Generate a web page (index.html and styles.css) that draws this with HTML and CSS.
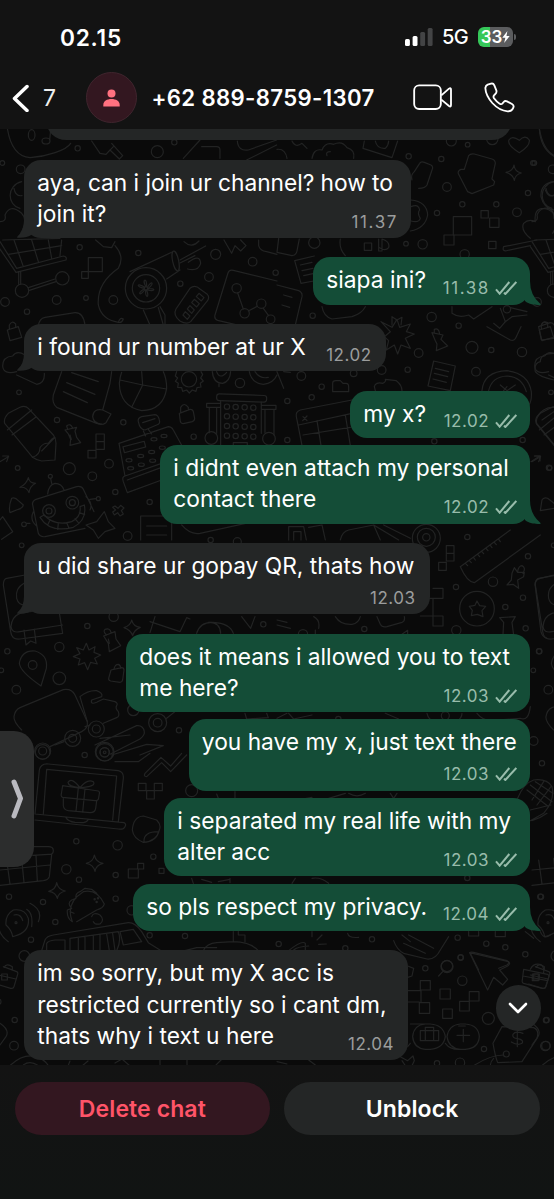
FILE: index.html
```
<!DOCTYPE html>
<html lang="id">
<head>
<meta charset="utf-8">
<title>Chat</title>
<link rel="stylesheet" href="styles.css">
</head>
<body>
<svg class="defs" width="0" height="0">
  <defs>
    <symbol id="ticks" viewBox="0 0 66 42"><path d="M3 25l11 13L43 3M27 35l4 4L64 3"/></symbol>
    <symbol id="tail-out" viewBox="0 0 16 24"><path d="M0 0V20C4 23.500 9 24 15 24Q16.300 23.600 15 22.500Q5 14 5 0Z"/></symbol>
    <symbol id="tail-in" viewBox="0 0 16 24"><path d="M16 0V20.500C12 23.500 7 24 1.500 23.700Q.5 23.300 1.500 22.500Q8 17 8 6V0Z"/></symbol>
  </defs>
</svg>
<div class="phone">
  <header class="top">
    <div class="status">
      <span class="clock">02.15</span>
      <div class="indicators">
        <svg class="signal" viewBox="0 0 28 18"><rect x="0" y="11" width="4.900" height="7" rx="1.500"/><rect x="7.600" y="8" width="4.900" height="10" rx="1.500"/><rect class="off" x="15.200" y="4" width="4.900" height="14" rx="1.500"/><rect class="off" x="22.700" y="0" width="4.900" height="18" rx="1.500"/></svg>
        <span class="net">5G</span>
        <span class="battery"><span class="pct">33</span><svg class="bolt" viewBox="0 0 8 13"><path d="M5.500 0L0 7.300H3.300L2 13 8 5.300H4.500Z"/></svg></span><span class="nub"></span>
      </div>
    </div>
    <div class="bar">
      <svg class="back" viewBox="0 0 18 28"><path d="M15 2.500L2.500 14.500 15 26.500"/></svg>
      <span class="count">7</span>
      <span class="avatar"><svg viewBox="0 0 17 18"><circle cx="8.500" cy="4.500" r="4"/><path d="M.3 17.500V16C.3 12 4 10 8.500 10s8.200 2 8.200 6v1.500Z"/></svg></span>
      <span class="title">+62 889-8759-1307</span>
      <svg class="video" viewBox="408 250 120 80"><rect x="411.500" y="254" width="80" height="71" rx="15"/><path d="M493 284L516 264Q522 260 522 267V313Q522 320 516 316L493 297"/></svg>
      <svg class="call" viewBox="622 244 93 93"><path d="M633 252L643 249Q650 247 653 254L659 269Q661 276 656 280L652 284Q649 288 652 293Q659 303 669 309Q674 312 677 309L681 304Q685 299 691 302L706 310Q713 314 710 321Q706 332 693 332Q668 330 647 307Q627 284 626 262Q627 255 633 252Z"/></svg>
    </div>
  </header>

  <main class="chat">
    <svg class="wallpaper" viewBox="0 0 554 936">
      <defs>
        <g id="strip">
          <!-- shopping cart and cloud -->
          <g transform="translate(0 -4) scale(.3333)">
            <path d="M22 10C30 60 50 95 90 98C140 95 200 75 212 55M65 170C20 180 20 240 60 250M42 190Q46 215 66 212M0 290Q20 290 15 270Q30 235 65 265Q85 285 62 325M0 350L50 430 190 393Q202 395 198 405L48 442-5 365M8 345L180 340M42 345L70 425M95 345L115 410M145 345L155 400M185 345L180 392M25 388L185 362M62 440V478M56 440V478M85 488L165 462M88 496L168 470"/>
            <circle cx="66" cy="497" r="20"/><circle cx="187" cy="460" r="20"/><circle cx="7" cy="114" r="7"/><circle cx="62" cy="133" r="13"/><circle cx="15" cy="531" r="13"/><circle cx="81" cy="560" r="8"/>
          </g>
          <!-- padlock, cloud, pencil, robot -->
          <g transform="translate(0 191) scale(.3333)">
            <path d="M22 30L55 20 65 52 30 62ZM28 26V15Q36 0 47 12V22M50 155Q10 165 8 138Q8 110 38 108Q50 90 75 105M50 165L110 193Q135 190 133 160M14 310Q10 295 25 280L60 262Q75 255 85 265L160 345Q168 355 168 370L165 420 125 423Q108 420 98 412ZM22 330L95 270M36 345L107 292M125 393L165 352M97 412Q120 405 120 383Q130 368 145 370Q155 355 165 352M0 425L25 410M8 408L26 408 20 425"/>
            <circle cx="57" cy="217" r="7"/><circle cx="53" cy="444" r="7"/>
          </g>
          <!-- book, map pin -->
          <g transform="translate(0 406) scale(.3333)">
            <path d="M75 120L20 130Q10 132 10 150L32 290Q35 315 60 312L188 295 175 215 60 235Q35 245 33 275Q35 295 60 290L188 270M72 285L78 330 92 318 108 325 103 282M123 453Q60 410 58 385Q65 345 105 348Q145 360 139 400ZM72 145Q45 160 50 190Q55 210 75 210"/>
            <circle cx="98" cy="390" r="13"/><circle cx="22" cy="349" r="8"/><circle cx="4" cy="406" r="7"/><circle cx="49" cy="464" r="13"/><circle cx="65" cy="31" r="7"/>
            <path d="M65 585Q40 560 42 545Q45 525 60 518L190 464Q215 460 225 480L262 560Q265 580 245 590L150 635"/>
          </g>
          <!-- basket, chat bubble, briefcase -->
          <g transform="translate(0 621) scale(.3333)">
            <path d="M100 290H145Q160 290 160 302Q160 315 145 313L98 316M155 314L148 380Q145 390 130 392L0 406M0 360L150 345M20 330L30 402M65 325L72 398M108 316L112 393M38 560Q35 540 18 525Q15 495 40 480Q75 475 85 505Q90 545 45 558ZM80 478Q100 490 95 530M90 460Q130 480 115 515M25 575Q-5 555 -5 520M42 495Q62 490 68 512"/>
            <circle cx="48" cy="518" r="3"/><circle cx="27" cy="440" r="8"/><circle cx="93" cy="569" r="8"/><circle cx="73" cy="618" r="16"/>
          </g>
          <g transform="translate(0 811) scale(.3333)">
            <path d="M10 80L50 95Q55 97 53 103L42 140Q40 147 32 145L-10 132M12 82Q20 68 37 80V90M-5 105L48 117M0 250Q30 270 18 290L0 315"/><rect x="5" y="102" width="17" height="18"/>
            <circle cx="44" cy="240" r="8"/><circle cx="42" cy="317" r="13"/><circle cx="-5" cy="185" r="8"/><path d="M32 375Q70 340 110 350Q135 360 145 377M70 375Q90 360 115 377"/>
          </g>
        </g>
      </defs>
      <use href="#strip"/><use href="#strip" x="532"/>
      <!-- hair dryer, comb, graph -->
      <g transform="translate(0 -4) scale(.3333)">
        <ellipse cx="95" cy="30" rx="10" ry="16"/><ellipse cx="138" cy="48" rx="12" ry="9"/><path d="M149 44L152 15 165 25"/>
        <circle cx="233" cy="70" r="8"/><circle cx="239" cy="367" r="8"/><circle cx="415" cy="384" r="8"/><circle cx="472" cy="80" r="18"/><circle cx="523" cy="52" r="8"/><circle cx="647" cy="388" r="15"/><circle cx="758" cy="410" r="13"/><circle cx="627" cy="456" r="13"/><circle cx="541" cy="476" r="8"/><circle cx="340" cy="525" r="13"/><circle cx="258" cy="519" r="7"/><circle cx="170" cy="525" r="13"/><circle cx="827" cy="443" r="8"/>
        <path d="M275 48L300 85 318 88 330 75 358 102 368 92 335 55M318 88L340 65M550 100L600 45M605 65H650Q660 65 660 75V100M712 48Q715 80 745 75L830 45M740 105L830 60"/>
        <rect x="265" y="398" width="42" height="42"/><rect x="245" y="440" width="20" height="20"/>
        <path d="M287 345L310 365 335 368 345 350M345 362Q375 395 355 430Q290 475 295 540Q305 585 355 592Q360 575 370 582Q365 595 355 592"/>
        <circle cx="438" cy="490" r="62"/><circle cx="438" cy="490" r="41"/><circle cx="438" cy="490" r="5"/>
        <path d="M438 485C425 465 440 455 440 482M443 486C455 465 465 475 445 490M443 492C470 488 465 502 443 495M440 496C450 520 435 520 437 496M434 495C420 515 410 505 432 492M433 490C405 485 412 472 434 487"/>
        <path d="M390 440L515 382M500 462L540 435M540 405L617 363M540 414L585 392M565 412Q600 385 602 415Q595 440 563 432M552 350Q575 372 597 348M430 555L450 600M475 548L490 600M480 545L495 570V600"/><ellipse cx="527" cy="408" rx="9" ry="30" transform="rotate(-12 527 408)"/>
        <path d="M570 490Q585 478 600 492L622 508Q630 517 622 528L572 590Q560 600 540 588Q518 570 528 552ZM597 505L612 518 604 528 589 515ZM583 523L598 536 590 546 575 533ZM570 542L583 555 575 565 562 552ZM556 560L570 573 562 583 549 570Z"/>
        <path d="M831 468L700 436Q688 433 684 444L645 570Q642 582 653 586L720 602M713 504L730 552M745 558L772 544M790 550L806 572"/><circle cx="710" cy="490" r="14"/><circle cx="734" cy="565" r="14"/><circle cx="784" cy="536" r="14"/><circle cx="812" cy="583" r="13"/>
        <path d="M672 345L695 385 705 362 722 378 738 362 722 345M776 345V362Q780 378 800 380L831 388M115 602Q118 580 135 577L225 563Q250 562 255 600"/>
      </g>
      <!-- gift glove, heart, squares -->
      <g transform="translate(277 -4) scale(.3333)">
        <path d="M727 83Q690 60 696 45Q705 30 727 46Q745 27 757 45Q760 62 727 83ZM787 10Q790 70 831 94M575 92Q580 85 592 87L645 102Q655 105 655 115L645 162 653 170 650 180 585 206 572 200 545 148Q540 138 552 133H562ZM711 120Q713 140 733 144Q715 148 712 166Q708 148 687 142Q708 138 711 120ZM831 170Q790 175 792 215Q800 250 831 255M805 195Q815 220 831 210M760 340Q730 315 740 295Q755 280 775 290Q770 250 800 250Q831 245 831 280M680 365L780 345M685 378L760 362M680 365Q675 378 687 378"/>
        <path d="M405 165Q400 150 412 140L428 115Q432 108 442 112L462 120Q470 125 465 135L450 180Q445 190 425 190M402 225Q450 230 452 270Q445 310 400 318M402 245Q425 235 428 255Q420 265 430 280Q425 295 402 288M105 100Q110 70 135 75Q145 50 170 58Q195 45 210 68Q235 75 230 100M150 92Q145 80 160 80M262 48L258 70 345 98 362 48M295 48Q300 72 325 70Q335 60 335 48M0 73Q25 70 30 100M45 48Q55 70 75 55L90 70"/>
        <circle cx="395" cy="94" r="8"/><circle cx="493" cy="102" r="8"/><circle cx="572" cy="59" r="7"/><circle cx="523" cy="48" r="15"/><circle cx="646" cy="42" r="17"/><circle cx="768" cy="114" r="7"/><circle cx="510" cy="186" r="13"/><circle cx="556" cy="238" r="8"/><circle cx="480" cy="264" r="8"/><circle cx="658" cy="238" r="8"/><circle cx="753" cy="204" r="8"/><circle cx="720" cy="262" r="13"/><circle cx="437" cy="358" r="14"/><circle cx="387" cy="356" r="7"/><circle cx="563" cy="388" r="14"/><circle cx="112" cy="353" r="17"/><circle cx="107" cy="572" r="8"/><circle cx="464" cy="576" r="14"/><circle cx="690" cy="553" r="11"/>
        <rect x="529" y="275" width="55" height="55"/><rect x="501" y="330" width="30" height="30"/><rect x="612" y="257" width="22" height="22"/><rect x="638" y="279" width="28" height="28"/><rect x="635" y="349" width="22" height="22"/><rect x="262" y="354" width="22" height="22"/>
        <path d="M53 407L112 393M53 407L72 475 110 468M70 420L105 412M75 437L108 430M80 452L108 446M5 340L0 382 45 392Q58 390 60 378L67 342M190 342Q185 370 205 392M305 342V378H315V342Q340 350 335 368Q325 380 308 368M0 480L65 497Q77 502 75 515L55 600M20 510L45 517M15 540L38 547M135 545Q140 575 165 582L225 575Q255 565 265 545M345 600V575L360 585 375 577 372 600M525 545V565Q545 580 575 570L590 582 645 545M670 550L685 590 705 575 750 570M700 548L750 560"/>
      </g>
      <!-- scroll, pie chart, gear, building, register, robot -->
      <g transform="translate(0 191) scale(.3333)">
        <path d="M185 155L160 225Q155 250 170 262L290 310Q305 318 318 308L333 282 308 270 330 190 335 155M308 270Q280 265 278 290Q280 310 305 312M215 158L295 185M200 188L285 223M190 215L262 248M358 190Q360 260 425 272Q490 270 500 205Q500 175 490 155M358 190Q360 170 365 157M425 155L428 195 500 207M360 180L428 195 395 262"/>
        <circle cx="567" cy="178" r="23"/><path d="M530 155L526 168 533 174 526 184 535 190 533 202 545 203 548 214 560 210 568 219 577 210 588 214 591 203 603 201 601 190 610 183 602 174 608 164 603 155"/><path d="M637 155Q640 190 668 190Q690 185 692 155M650 155Q660 180 680 157M657 192V200M748 155Q755 190 790 193Q820 190 831 165M765 155Q780 178 805 172"/>
        <circle cx="720" cy="189" r="14"/><circle cx="171" cy="300" r="8"/><circle cx="370" cy="307" r="8"/><circle cx="581" cy="350" r="8"/><circle cx="208" cy="446" r="18"/><circle cx="327" cy="431" r="13"/><circle cx="277" cy="469" r="13"/><circle cx="346" cy="516" r="8"/><circle cx="449" cy="546" r="8"/><circle cx="383" cy="648" r="13"/>
        <rect x="650" y="224" width="150" height="20" rx="8" transform="rotate(2 720 234)"/><path d="M662 242V376M784 246V340M620 250H660M620 262H660M620 250V262M628 262V338M650 262V340M785 256H828V268H785M795 268V338M822 268V345M700 376V368H742V376"/>
        <circle cx="634" cy="354" r="19"/><circle cx="807" cy="356" r="19"/>
        <g id="windows"><circle cx="681" cy="260" r="8"/><circle cx="707" cy="261" r="8"/><circle cx="734" cy="262" r="8"/><circle cx="760" cy="263" r="8"/></g><use href="#windows" y="29"/><use href="#windows" y="58"/><use href="#windows" y="87"/>
        <path d="M538 280L570 268Q578 267 580 275L584 295Q584 303 577 305L550 311Q543 311 541 304ZM542 278V262Q552 245 565 262V270M195 330L230 322 225 333 230 352 242 368 210 376 212 358 205 342ZM203 328L200 318Q212 308 218 325M214 358L210 345M288 342H313V388H288ZM288 365H313M264 391H288V414H264Z"/>
        <path d="M415 305Q412 295 425 290L465 284Q475 285 478 300Q482 312 470 315L435 330Q420 330 415 305ZM428 308L465 296M445 328L455 342M430 333L437 348M357 370L505 320Q515 320 520 330L545 376M357 370L375 468 485 430M375 468Q365 470 370 485L382 518 485 480M382 480L485 442"/><rect x="370" y="372" width="66" height="18" transform="rotate(-15 403 381)"/>
        <ellipse cx="462" cy="358" rx="9" ry="5"/><ellipse cx="492" cy="348" rx="9" ry="5"/><ellipse cx="387" cy="421" rx="9" ry="5"/><ellipse cx="422" cy="408" rx="9" ry="5"/><ellipse cx="455" cy="396" rx="9" ry="5"/><ellipse cx="487" cy="383" rx="9" ry="5"/><ellipse cx="392" cy="445" rx="9" ry="5"/><ellipse cx="424" cy="434" rx="9" ry="5"/><ellipse cx="458" cy="422" rx="9" ry="5"/>
        <path d="M85 473Q88 490 107 490Q90 498 87 518Q80 500 60 502Q80 492 85 473ZM35 535Q45 530 55 542L70 555Q68 565 55 568L30 578Q25 560 35 535ZM143 522Q145 495 165 490Q185 490 192 510M155 490L152 476M98 555Q95 545 108 538L230 500Q245 497 250 508L282 575M98 555L115 640Q120 652 135 650L255 625M100 575Q88 600 110 618M90 610H80M258 530Q280 550 270 570M270 538L287 536M120 592L132 585Q165 620 215 605Q245 590 240 560L253 555Q262 600 220 622Q150 640 120 592ZM150 600L143 615M175 610L173 628M200 608L207 625M225 596L237 610M238 578L254 584M313 575L325 605 345 625 315 635 295 655 280 630 258 615 290 605Z"/>
        <circle cx="147" cy="573" r="19"/><circle cx="147" cy="573" r="9"/><circle cx="217" cy="548" r="19"/><circle cx="217" cy="548" r="9"/><circle cx="151" cy="469" r="6"/><circle cx="295" cy="536" r="6"/><circle cx="72" cy="613" r="7"/>
        <path d="M345 558L354 565 362 556 372 564 364 572 370 582 360 588 353 578 343 585 338 576 347 570 338 562ZM422 660V588H515V660M440 618H500M440 645H500M0 600L8 590 38 635 5 658M545 615Q570 645 600 640L830 590"/>
      </g>
      <!-- burst, receipt, window, clock -->
      <g transform="translate(277 191) scale(.3333)">
        <path d="M360 -2L368 22 400 12 388 35 412 42 385 55 400 85 372 75 362 102 352 75 328 90 335 62 322 50 340 35 312 5 345 22ZM465 38L498 45 492 58 512 78 478 92 480 72 475 62ZM472 38V28Q485 22 488 42M630 20L700 60Q712 65 718 50L732 20M650 10L668 25 685 5M785 20L820 8Q828 8 831 15M785 20L793 60 831 55M793 18Q795 0 812 8M831 100Q790 100 790 125Q770 130 775 155Q785 170 831 180M470 123L535 138 520 212 453 198ZM475 145L515 155M472 160L512 170M468 177L508 187"/>
        <path d="M167 190Q167 182 177 182H190L198 190H207Q215 190 215 200V215H167ZM295 212L292 200Q295 185 318 190Q328 185 325 178L358 182Q375 195 375 212M58 290Q55 275 70 270L225 240M58 290L75 376M65 315L225 280M120 302L132 376M205 285L220 376M78 290L90 302M90 288L77 302M78 345L220 322M0 155L20 205M20 155L40 157"/>
        <path d="M615 212Q620 155 690 152Q755 160 763 215Q765 245 755 255M635 212Q645 170 690 168Q735 170 748 215M670 195L690 212 715 195M680 212L690 200M831 262Q800 260 780 290Q770 305 785 320L831 376M795 300L831 275"/>
        <circle cx="545" cy="17" r="8"/><circle cx="425" cy="99" r="13"/><circle cx="585" cy="82" r="18"/><circle cx="643" cy="90" r="8"/><circle cx="735" cy="96" r="14"/><circle cx="597" cy="155" r="13"/><circle cx="392" cy="149" r="8"/><circle cx="314" cy="150" r="13"/><circle cx="134" cy="200" r="8"/><circle cx="104" cy="232" r="8"/><circle cx="31" cy="243" r="8"/><circle cx="73" cy="168" r="13"/><circle cx="230" cy="160" r="10"/><circle cx="31" cy="360" r="8"/><circle cx="737" cy="360" r="8"/><circle cx="472" cy="364" r="8"/><circle cx="816" cy="443" r="8"/>
        <path d="M762 425L788 408M772 408H789V423M795 540Q800 530 812 535L831 550M795 540L790 572 831 565M35 660V620H80L88 660M50 660V635H72V660M95 622L135 615 145 660M190 660Q195 635 215 630L290 615 365 660M290 615L310 660M320 615L400 655"/><circle cx="448" cy="655" r="42"/><circle cx="448" cy="652" r="27"/><circle cx="448" cy="652" r="11"/>
      </g>
      <!-- sparkle, pin, shopping bag, truck -->
      <g transform="translate(0 406) scale(.3333)">
        <path d="M395 255Q400 275 421 277Q402 285 398 302Q392 285 372 278Q392 272 395 255ZM311 303L345 290 348 312 362 332 328 350 325 325ZM320 300Q308 290 315 283Q330 278 333 292M328 325L325 312M259 325L267 345 285 335 282 352 302 360 284 370 292 387 272 382 263 404 254 383 235 390 240 372 220 365 240 356 230 338 250 345ZM333 405L365 398Q372 398 372 405L368 435Q366 442 360 442L332 438Q325 436 326 430ZM342 402Q345 388 355 388Q362 390 362 400M465 245L450 293M450 260L540 290 560 248 570 252M500 300L530 310M590 295Q600 260 640 262Q690 265 700 295M625 262Q660 260 662 295M725 245L752 280 765 245M240 485Q265 465 290 467Q310 475 305 485L275 495Q270 510 290 502L310 492 345 500Q355 505 350 512Q345 520 355 530Q360 545 350 548L310 565M240 485L262 560M255 575L270 570M192 620L165 630M285 630L410 572Q430 570 433 590Q435 600 420 612L330 658M300 610L390 600M335 660L440 628 490 632 420 660"/>
        <circle cx="262" cy="273" r="8"/><circle cx="178" cy="336" r="14"/><circle cx="178" cy="430" r="19"/><circle cx="341" cy="245" r="14"/><circle cx="289" cy="582" r="24"/><circle cx="289" cy="582" r="12"/><circle cx="218" cy="610" r="24"/><circle cx="218" cy="610" r="12"/><circle cx="128" cy="648" r="24"/><circle cx="128" cy="648" r="12"/><circle cx="314" cy="652" r="26"/><circle cx="314" cy="652" r="14"/><circle cx="314" cy="652" r="4"/><circle cx="473" cy="563" r="27"/><circle cx="473" cy="563" r="13"/><circle cx="537" cy="586" r="8"/><circle cx="790" cy="268" r="8"/><circle cx="632" cy="15" r="8"/><circle cx="712" cy="20" r="12"/><circle cx="400" cy="525" r="17"/>
        <path d="M500 550L525 530M735 535L740 552 805 548 800 535"/>
      </g>
      <!-- ruler, star coin, nodes -->
      <g transform="translate(277 406) scale(.3333)">
        <path d="M550 95L700 -15M550 95Q570 140 592 143L790 0M565 85L572 92M577 77L583 83M590 68L595 75M602 58L608 65M614 49L620 56M627 40L633 47M640 31L645 38M652 22L658 29M665 13L670 20M508 32H531V78H508ZM508 55H531M485 82H508V106H485ZM468 160H498V190H455M468 190V245M430 243H468M468 243H498V273H468ZM712 98L722 112 742 112 740 125 722 135 725 160 708 148 690 150 703 135 705 115ZM722 110Q725 92 735 92Q748 98 738 115M600 198L608 212 626 214 615 227 618 245 601 238 583 242 586 226 577 214 594 211ZM668 248L715 245 705 262 710 300M668 248L680 262 678 300M600 535Q620 560 650 556L730 550Q755 560 760 515M0 255L30 262M0 270L40 280M110 245Q130 255 125 280M115 285V300M175 245Q190 270 225 268Q245 265 250 245M300 245L310 268Q315 278 330 275L375 262Q385 258 382 245M375 298L392 286V298M0 550L30 535M35 535L50 552 105 540M325 535L365 552M450 535Q455 555 470 558H540Q555 550 555 535M831 120L790 130Q770 135 775 155L792 290Q795 305 810 310"/>
        <circle cx="600" cy="221" r="52"/><circle cx="648" cy="140" r="14"/><circle cx="537" cy="156" r="8"/><circle cx="753" cy="64" r="8"/><circle cx="738" cy="188" r="8"/><circle cx="685" cy="216" r="8"/><circle cx="746" cy="280" r="8"/><circle cx="538" cy="286" r="14"/><circle cx="262" cy="282" r="8"/><circle cx="571" cy="6" r="8"/><circle cx="786" cy="349" r="8"/><circle cx="770" cy="618" r="13"/><circle cx="184" cy="552" r="8"/><circle cx="505" cy="542" r="12"/><circle cx="78" cy="298" r="14"/>
      </g>
      <!-- laptop with gift, taco, bus -->
      <g transform="translate(0 621) scale(.3333)">
        <path d="M105 192L118 60Q122 40 145 42L355 62Q372 66 370 85L355 215M130 192L140 58 350 78 338 210M105 192L372 218Q380 222 375 230Q370 240 355 237L105 210M198 203Q205 215 225 217L250 218Q262 216 265 208M188 107L295 123Q300 125 298 132L295 148Q293 153 285 152L188 142Q182 140 184 132ZM190 143V168Q192 180 205 182L270 188Q285 188 287 175L290 153M235 113L228 184M255 117L248 187M240 113Q205 110 204 97Q215 80 240 113Q262 85 280 95Q290 110 240 113M435 70Q430 80 440 80L485 38 512 65 560 15M435 70L483 22 512 48 545 10M415 100H438V122H415ZM463 100H487V122H463ZM440 122H463V147H440ZM397 240Q400 200 430 198L470 210Q485 225 478 240Q470 275 430 277Q400 265 397 240ZM432 275Q430 245 475 245M283 315Q288 338 309 340Q288 345 285 364Q280 343 259 340Q280 335 283 315ZM170 398Q175 420 196 423Q175 428 172 445Q168 427 146 424Q168 418 170 398ZM385 357H415V384H385ZM413 340H431V357H413ZM477 355H492V370H477ZM217 515Q195 460 250 425Q290 415 313 462Q310 475 290 480L230 515M217 515Q200 505 202 480L215 475Q200 460 215 450L228 445Q225 430 240 425L255 415 275 418 290 430M210 485L222 490M275 500Q280 485 300 495Q315 510 300 522Q285 525 280 515M345 35H415L450 10M575 385L580 400M690 385V398M605 388L635 397M655 395L690 388"/>
        <circle cx="284" cy="448" r="2"/><circle cx="294" cy="445" r="2"/><circle cx="290" cy="456" r="2"/><circle cx="254" cy="15" r="8"/><circle cx="128" cy="6" r="22"/><circle cx="314" cy="5" r="28"/><circle cx="314" cy="7" r="14"/><circle cx="229" cy="274" r="8"/><circle cx="353" cy="286" r="14"/><circle cx="199" cy="358" r="14"/><circle cx="237" cy="389" r="8"/><circle cx="347" cy="375" r="8"/><circle cx="129" cy="456" r="8"/><circle cx="166" cy="516" r="8"/><circle cx="347" cy="446" r="8"/><circle cx="460" cy="320" r="8"/><circle cx="575" cy="122" r="18"/><circle cx="449" cy="556" r="8"/><circle cx="555" cy="558" r="8"/><circle cx="395" cy="481" r="14"/>
        <path d="M125 602L135 570Q140 558 160 555L385 518Q405 517 425 545L445 578 480 600M140 602V580Q145 572 165 570L195 570V602M210 602V565L355 545Q365 570 350 602M235 562V602M255 560V602M280 557V602M300 554V602M320 552L328 602M338 550L345 602M360 545L400 538 425 575 370 585ZM555 602L590 593H650M610 602Q620 580 650 578L700 575Q750 575 775 602M700 545V575M715 545V555H735V575M650 132L655 145M705 125V145"/>
      </g>
      <!-- corn, sheet, cursor -->
      <g transform="translate(277 621) scale(.3333)">
        <path d="M722 145Q740 100 770 90Q810 85 825 110Q835 150 800 190L760 212M760 105L825 155M775 95L828 130M750 120L815 170M765 150L800 95M780 165L822 110M760 180Q780 175 822 165M765 212Q790 205 810 190M85 600L85 580Q75 570 35 602M50 600Q60 590 95 588M105 545V560M120 570L135 555M125 583L148 582M212 550Q215 565 245 562M350 572Q360 600 380 610L450 627Q475 630 490 600L515 560M375 555L400 575M395 555L470 595M380 580L445 610M575 545V558H605V545M655 545V560H685V545M580 610Q575 605 590 607L690 632Q700 638 690 645L665 655M580 610L605 660M155 145L205 130M60 150L105 142M215 130Q240 145 265 130M340 130L350 145 360 130M105 385Q130 380 155 400M45 400L55 385M745 545L770 565M790 545Q800 570 820 555"/>
        <circle cx="795" cy="40" r="8"/><circle cx="790" cy="440" r="8"/><circle cx="542" cy="563" r="8"/><circle cx="628" cy="581" r="8"/><circle cx="685" cy="592" r="8"/><circle cx="745" cy="613" r="8"/><circle cx="551" cy="622" r="8"/><circle cx="510" cy="648" r="17"/><circle cx="285" cy="568" r="8"/><circle cx="205" cy="595" r="8"/><circle cx="5" cy="582" r="8"/><circle cx="571" cy="384" r="8"/>
      </g>
      <!-- badges, price tag -->
      <g transform="translate(277 811) scale(.3333)">
        <path d="M578 38L695 65Q702 70 692 78L668 90 692 118 677 135 650 112 632 150ZM497 95L485 108M392 78L410 85 405 108 392 112M392 152H432M430 122H460V150H430ZM432 150V188M392 186H427M427 188H458V220H427ZM489 147H520V177H489ZM497 207H526V235H497ZM577 155H606V183H577ZM548 184H577V213H548ZM740 88L812 103Q817 105 815 112L806 140Q804 147 796 145L740 130Q734 128 736 120ZM760 88Q770 68 792 74Q802 80 800 98M738 108L812 122M766 102H784V122H766ZM400 252H460Q500 255 505 290Q500 325 460 328H445Q410 325 407 290Q410 255 445 252M550 252Q515 255 510 290Q515 325 550 328H565Q605 325 607 290Q605 255 565 252ZM545 258H565M430 272H485V302H430ZM445 272V262H470V272M445 272V302M470 272V302M559 268V305M540 286H578M392 320L400 310M505 310Q520 330 550 328M675 260L648 310Q655 350 662 368L735 365 780 295Q788 270 770 263ZM738 280Q715 272 708 283Q705 295 722 296Q742 300 735 310Q722 318 703 306M721 270V320M590 377Q640 345 680 345M650 355Q640 365 640 377M370 350L392 362 408 348 412 362 405 377M375 362L385 377M95 360L115 375M0 365L30 372"/>
        <circle cx="510" cy="80" r="18"/><circle cx="551" cy="53" r="8"/><circle cx="556" cy="122" r="14"/><circle cx="445" cy="85" r="8"/><circle cx="634" cy="235" r="18"/><circle cx="621" cy="327" r="8"/><circle cx="688" cy="342" r="9"/><circle cx="807" cy="241" r="8"/><circle cx="805" cy="318" r="14"/><circle cx="549" cy="368" r="14"/><circle cx="480" cy="370" r="8"/>
      </g>
      <path d="M68 937L70 932M88 932L82 937M115 934L122 930 130 937M160 930V937M187 930V937M215 937L222 930"/>
    </svg>

    <div class="notice"></div>
    <div class="msg in w1"><p><span class="tight">aya, can i join ur channel? how to</span><span>join it?</span></p><div class="meta ones">11.37</div><svg class="tail"><use href="#tail-in"/></svg></div>
    <div class="msg out w2 far"><p><span>siapa ini?</span></p><div class="meta"><span class="ones">11.38</span><svg class="ticks"><use href="#ticks"/></svg></div><svg class="tail"><use href="#tail-out"/></svg></div>
    <div class="msg in w3 far"><p><span>i found ur number at ur X</span></p><div class="meta">12.02</div><svg class="tail"><use href="#tail-in"/></svg></div>
    <div class="msg out w4 far"><p><span>my x?</span></p><div class="meta">12.02<svg class="ticks"><use href="#ticks"/></svg></div></div>
    <div class="msg out w5"><p><span>i didnt even attach my personal</span><span>contact there</span></p><div class="meta">12.02<svg class="ticks"><use href="#ticks"/></svg></div><svg class="tail"><use href="#tail-out"/></svg></div>
    <div class="msg in w6 stacked far"><p><span>u did share ur gopay QR, thats how</span></p><div class="meta">12.03</div><svg class="tail"><use href="#tail-in"/></svg></div>
    <div class="msg out w7 far"><p><span>does it means i allowed you to text</span><span>me here?</span></p><div class="meta">12.03<svg class="ticks"><use href="#ticks"/></svg></div></div>
    <div class="msg out w8 stacked"><p><span>you have my x, just text there</span></p><div class="meta">12.03<svg class="ticks"><use href="#ticks"/></svg></div></div>
    <div class="msg out w9"><p><span>i separated my real life with my</span><span>alter acc</span></p><div class="meta">12.03<svg class="ticks"><use href="#ticks"/></svg></div></div>
    <div class="msg out w10"><p><span>so pls respect my privacy.</span></p><div class="meta">12.04<svg class="ticks"><use href="#ticks"/></svg></div><svg class="tail"><use href="#tail-out"/></svg></div>
    <div class="msg in w11 far"><p><span>im so sorry, but my X acc is</span><span>restricted currently so i cant dm,</span><span>thats why i text u here</span></p><div class="meta">12.04</div></div>

    <div class="handle"><svg viewBox="0 0 12 42"><path d="M3 4L9.500 20.500 3 38"/></svg></div>
    <div class="down"><svg viewBox="0 0 20 12"><path d="M2 2L10 10 18 2"/></svg></div>
  </main>

  <footer class="actions">
    <button class="btn danger">Delete chat</button>
    <button class="btn">Unblock</button>
  </footer>
</div>
</body>
</html>
```
FILE: styles.css
```
* { box-sizing: border-box; }
body { margin: 0; background: #121313; color: #fff; font-family: Inter, "Liberation Sans", sans-serif; }
.defs { position: absolute; }
.phone { width: 554px; height: 1199px; display: flex; flex-direction: column; overflow: hidden; }

.top { height: 129px; background: #131313; flex: none; }
.status { height: 74px; padding: 0 38px 0 60px; display: flex; align-items: center; justify-content: space-between; }
.clock { font-size: 22.700px; font-weight: 600; letter-spacing: .75px; }
.indicators { display: flex; align-items: center; }
.signal { width: 28px; height: 18px; fill: #fff; }
.signal .off { fill: #434445; }
.net { font-size: 20px; font-weight: 500; margin-left: 9px; width: 36px; letter-spacing: -.6px; }
.battery { width: 35px; height: 19.500px; border-radius: 6px; background: linear-gradient(90deg, #35c759 12px, #5b5c5e 12px); display: flex; align-items: center; justify-content: center; gap: 0; }
.pct { font-size: 17px; font-weight: 600; letter-spacing: 0; line-height: 19px; }
.bolt { width: 8px; height: 12px; fill: #fff; }
.nub { width: 2px; height: 6px; border-radius: 0 2px 2px 0; background: #5b5c5e; margin-left: 1px; }
.bar { height: 47px; display: flex; align-items: center; padding-left: 12px; }
.back { width: 18px; height: 28px; fill: none; stroke: #fff; stroke-width: 3.500; stroke-linecap: round; stroke-linejoin: round; }
.count { font-size: 23px; margin-left: 13px; width: 43px; color: #eee; }
.avatar { width: 51px; height: 51px; border-radius: 50%; background: #331720; border: 1px solid #40252e; display: flex; align-items: center; justify-content: center; flex: none; }
.avatar svg { width: 17px; height: 18px; fill: #ff7180; }
.title { font-size: 22.200px; font-weight: 600; letter-spacing: .35px; margin-left: 14.500px; width: 261.500px; white-space: nowrap; }
.video { width: 40px; height: 26.670px; fill: none; stroke: #fff; stroke-width: 5.500; stroke-linejoin: round; }
.call { width: 31px; height: 31px; margin-left: 31px; fill: none; stroke: #fff; stroke-width: 5.500; stroke-linejoin: round; }

.chat { position: relative; height: 936px; flex: none; background: #0a0a0a; overflow: hidden; display: flex; flex-direction: column; padding: 0 24px; }
.wallpaper { position: absolute; left: 0; top: 0; width: 554px; height: 936px; fill: none; stroke: #222323; stroke-width: 3.600; stroke-linejoin: round; stroke-linecap: round; }
.wallpaper > path { stroke-width: 1.200; }
.notice { position: relative; width: 466px; height: 40px; margin: -29px 0 12.400px 22px; border-radius: 24px; background: #242626; flex: none; }
.msg { position: relative; display: flex; justify-content: space-between; align-items: flex-end; flex: none; border-radius: 17px; margin-top: 7.150px; padding: 7px 14px 9px 13.300px; font-size: 22.750px; line-height: 31.300px; white-space: nowrap; }
.in { background: #242626; align-self: flex-start; }
.out { background: #144d37; align-self: flex-end; padding-right: 13px; }
.far { margin-top: 19.300px; }
.msg p { margin: 0; min-width: 0; width: 0; }
.msg p span { display: block; }
.tight { letter-spacing: -.04px; }
.meta { display: flex; align-items: center; gap: 6px; font-size: 17px; line-height: 20px; letter-spacing: .5px; color: #9b9d9d; margin-bottom: -2.500px; }
.ones { letter-spacing: 1.600px; }
.meta.ones { margin-right: -1px; }
.meta span.ones { margin-right: -1px; }
.out .meta { color: #98bcab; }
.ticks { width: 22px; height: 14px; fill: none; stroke: #98bcab; stroke-width: 6; }
.stacked { flex-direction: column; align-items: flex-end; justify-content: flex-start; }
.stacked p { align-self: flex-start; }
.stacked .meta { margin-top: 6.600px; }
.tail { position: absolute; width: 16px; height: 24px; bottom: 0; right: -11px; fill: #144d37; }
.in .tail { right: auto; left: -8px; fill: #242626; }
.w1 { width: 387px; } .w2 { width: 217px; } .w3 { width: 361.500px; } .w4 { width: 180px; }
.w5 { width: 370px; } .w6 { width: 405.500px; } .w7 { width: 404px; } .w8 { width: 341.500px; }
.w9 { width: 366px; } .w10 { width: 397px; } .w11 { width: 384px; }

.handle { position: absolute; left: 0; top: 601.500px; width: 34px; height: 136px; border-radius: 0 20px 20px 0; background: #2c2d2d; display: flex; align-items: center; padding-left: 10.500px; }
.handle svg { width: 12px; height: 42px; fill: none; stroke: #b9b9bf; stroke-width: 5; stroke-linecap: round; stroke-linejoin: round; }
.down { position: absolute; left: 495.500px; top: 856px; width: 45.500px; height: 45.500px; border-radius: 50%; background: #242626; display: flex; align-items: center; justify-content: center; }
.down svg { width: 20px; height: 12px; fill: none; stroke: #fff; stroke-width: 2.600; stroke-linecap: round; stroke-linejoin: round; }

.actions { flex: 1; display: flex; gap: 14px; align-items: flex-start; padding: 17.300px 14px 0 14.500px; background: linear-gradient(#131313, #111413); }
.btn { flex: 1; height: 52.500px; border: 0; border-radius: 27px; background: #242626; color: #fff; font: 600 23px Inter, sans-serif; letter-spacing: .1px; }
.danger { background: #331720; color: #ff5468; }
```
